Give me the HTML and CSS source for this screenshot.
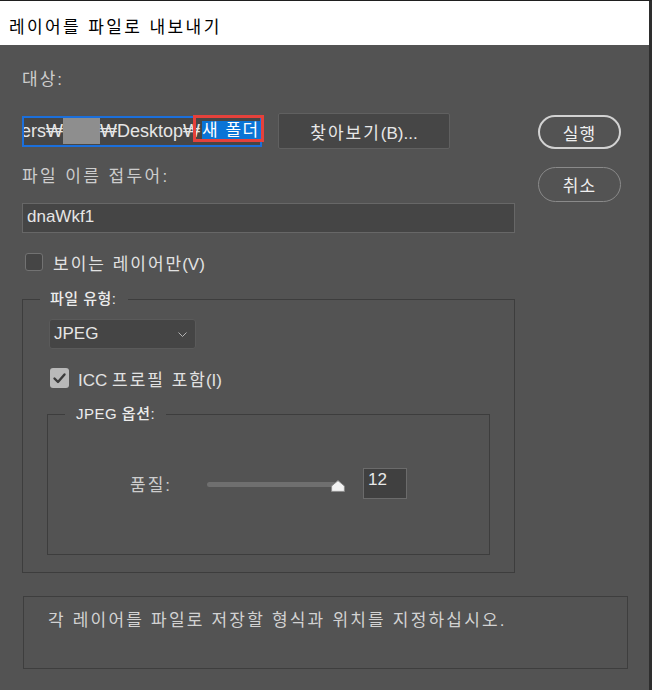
FILE: index.html
```html
<!DOCTYPE html>
<html lang="ko">
<head>
<meta charset="utf-8">
<title>레이어를 파일로 내보내기</title>
<link rel="stylesheet" href="styles.css">
</head>
<body>
<div class="window">
  <div class="titlebar"><span class="title">레이어를 파일로 내보내기</span></div>
  <div class="body">
    <div class="top">
      <div class="left">
        <div class="label lbl-target ko">대상:</div>
        <div class="path-row">
          <div class="path-input">
            <span class="clip">ers₩</span>
            <span class="redact"></span>
            <span>₩Desktop₩</span>
            <span class="sel">새 폴더</span>
          </div>
          <div class="annot"></div>
          <button class="browse"><span class="ko">찾아보기</span>(B)...</button>
        </div>
        <div class="label lbl-prefix ko">파일 이름 접두어:</div>
        <div class="text-input">dnaWkf1</div>
        <div class="chk-row"><span class="chk"></span><span><span class="ko">보이는 레이어만</span><span class="tight">(V)</span></span></div>
        <fieldset class="group outer">
          <legend>파일 유형:</legend>
          <div class="select"><span>JPEG</span><svg class="chev" width="9" height="5" viewBox="0 0 9 5"><path d="M0.5 0.5 L4.5 4.5 L8.5 0.5" fill="none" stroke="#b4b4b4" stroke-width="1"/></svg></div>
          <div class="chk-row2"><span class="chk checked"><svg width="19" height="20" viewBox="0 0 19 20"><path d="M4.5 10.5 L8 14 L14.5 6.5" fill="none" stroke="#3b3b3b" stroke-width="2.4" stroke-linecap="round" stroke-linejoin="round"/></svg></span><span>ICC <span class="ko">프로필 포함</span><span class="tight">(I)</span></span></div>
          <fieldset class="group inner">
            <legend>JPEG 옵션:</legend>
            <div class="quality-row">
              <span class="label ko">품질:</span>
              <div class="slider">
                <div class="track"></div>
                <svg class="thumb" width="14" height="12" viewBox="0 0 14 12"><path d="M7 0.6 L13.4 6 L13.4 11.4 L0.6 11.4 L0.6 6 Z" fill="#f2f2f2" stroke="#8a8a8a" stroke-width="1"/></svg>
              </div>
              <div class="value">12</div>
            </div>
          </fieldset>
        </fieldset>
      </div>
      <div class="right">
        <button class="pill primary">실행</button>
        <button class="pill secondary">취소</button>
      </div>
    </div>
    <div class="desc">각 레이어를 파일로 저장할 형식과 위치를 지정하십시오.</div>
  </div>
</div>
</body>
</html>
```

FILE: styles.css
```css
html, body {
  margin: 0;
  padding: 0;
  background: #535353;
}
body {
  font-family: "Liberation Sans", "Noto Sans CJK KR", sans-serif;
  font-size: 17px;
}
.window {
  width: 652px;
  height: 690px;
  box-sizing: border-box;
  border-top: 1px solid #1f1f1f;
  border-right: 3px solid #2e2e2e;
  background: #535353;
  overflow: hidden;
}
.titlebar {
  height: 44px;
  box-sizing: border-box;
  padding: 5px 0 0 9px;
  background: #ffffff;
  display: flex;
  align-items: center;
  color: #000;
  letter-spacing: 2.4px;
}
.ko { letter-spacing: 2px; }
.tight { margin-left: -1px; }
.body { padding-left: 22px; }
.top { display: flex; gap: 23px; }
.left { width: 493px; }
.label { color: #cdcdcd; }
.lbl-target { margin-top: 21px; height: 25px; line-height: 27px; }
.path-row {
  position: relative;
  margin-top: 22px;
  height: 36px;
  display: flex;
  align-items: center;
  gap: 16px;
}
.path-input {
  width: 240px;
  height: 31px;
  flex: none;
  box-sizing: border-box;
  border: 2px solid #1b6fdb;
  background: #464646;
  display: flex;
  align-items: center;
  overflow: hidden;
  white-space: nowrap;
  color: #e6e6e6;
  font-size: 18px;
}
.clip { margin-left: -3px; }
.redact { width: 37px; height: 26px; background: #8e8e8e; flex: none; }
.sel {
  background: #0a74d6;
  color: #fff;
  height: 20px;
  line-height: 20px;
  margin-left: 2px;
  padding-right: 2px;
  letter-spacing: 1.5px;
  font-size: 17px;
}
.annot {
  position: absolute;
  left: 171px;
  top: 2px;
  width: 71px;
  height: 27px;
  box-sizing: border-box;
  border: 3px solid #e5413b;
}
button {
  font: inherit;
  margin: 0;
  padding: 0;
  cursor: default;
}
.browse {
  width: 172px;
  height: 36px;
  box-sizing: border-box;
  border: 1px solid #606060;
  border-radius: 2px;
  background: #464646;
  color: #e8e8e8;
}
.lbl-prefix { margin-top: 17px; height: 20px; line-height: 21px; letter-spacing: 2.4px; }
.text-input {
  margin-top: 17px;
  height: 30px;
  box-sizing: border-box;
  border: 1px solid #676767;
  background: #454545;
  color: #e6e6e6;
  padding-left: 4px;
  line-height: 25px;
}
.chk-row {
  margin-top: 20px;
  height: 18px;
  display: flex;
  align-items: center;
  gap: 10px;
  padding-left: 3px;
  color: #e2e2e2;
}
.chk {
  width: 18px;
  height: 18px;
  flex: none;
  box-sizing: border-box;
  border: 1px solid #727272;
  border-radius: 3px;
  background: #454545;
}
fieldset.group {
  padding: 0;
  border: 1px solid #3d3d3d;
  min-width: 0;
  box-sizing: border-box;
}
legend {
  padding: 0 11px 0 10px;
  margin-left: 17px;
  line-height: 20px;
  font-size: 15px;
  font-weight: 500;
  color: #ececec;
  letter-spacing: 0.5px;
}
fieldset.outer { margin: 18px 0 0 0; height: 284px; }
.select {
  margin-top: 10px;
  margin-left: 26px;
  width: 147px;
  height: 30px;
  box-sizing: border-box;
  border: 1px solid #5a5a5a;
  border-radius: 3px;
  background: #454545;
  display: flex;
  align-items: center;
  justify-content: space-between;
  padding: 0 8px 0 4px;
  color: #e6e6e6;
}
.chk-row2 {
  margin-top: 19px;
  margin-left: 27px;
  height: 20px;
  display: flex;
  align-items: center;
  gap: 9px;
  color: #e2e2e2;
}
.chk.checked {
  width: 19px;
  height: 20px;
  border: none;
  background: #b9b9b9;
  display: block;
}
.chk.checked svg { display: block; }
fieldset.inner {
  margin: 16px 0 0 24px;
  width: 443px;
  height: 151px;
}
.inner legend { padding: 0 11px; margin-left: 17px; }
.quality-row {
  margin-top: 44px;
  height: 31px;
  display: flex;
  align-items: center;
  padding-left: 82px;
}
.slider {
  position: relative;
  margin-left: 35px;
  width: 138px;
  height: 12px;
  margin-top: 5px;
  padding-top: 2px;
  box-sizing: border-box;
}
.track {
  width: 129px;
  height: 5px;
  border-radius: 3px;
  background: #6f6f6f;
}
.thumb { position: absolute; right: 0; top: 0; }
.value {
  margin-left: 18px;
  width: 44px;
  height: 31px;
  box-sizing: border-box;
  border: 1px solid #6b6b6b;
  background: #404040;
  color: #e8e8e8;
  padding: 1px 0 0 4px;
  line-height: 20px;
}
.right {
  padding-top: 70px;
  display: flex;
  flex-direction: column;
  gap: 18px;
}
.pill {
  width: 83px;
  height: 35px;
  box-sizing: border-box;
  border-radius: 18px;
  background: transparent;
  color: #f0f0f0;
  letter-spacing: 1px;
}
.pill.primary { border: 2px solid #d2d2d2; height: 34px; }
.pill.secondary { border: 1.5px solid #8a8a8a; }
.desc {
  margin-top: 23px;
  margin-left: 1px;
  width: 605px;
  height: 73px;
  box-sizing: border-box;
  border: 1px solid #3e3e3e;
  padding: 14px 0 0 24px;
  line-height: 20px;
  color: #d2d2d2;
  letter-spacing: 2.2px;
}
```
